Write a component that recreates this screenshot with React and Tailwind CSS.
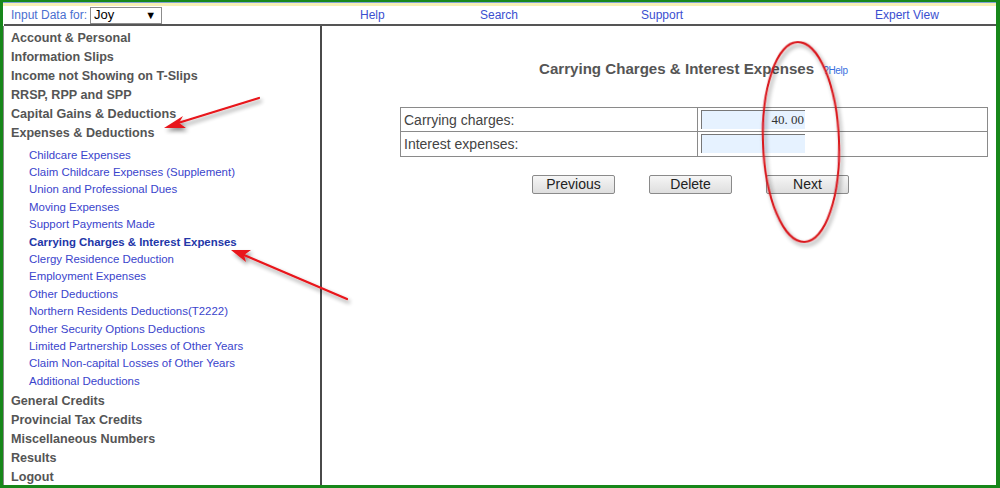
import React from "react";

const mainItems1 = [
  "Account & Personal",
  "Information Slips",
  "Income not Showing on T-Slips",
  "RRSP, RPP and SPP",
  "Capital Gains & Deductions",
  "Expenses & Deductions",
];
const subItems = [
  "Childcare Expenses",
  "Claim Childcare Expenses (Supplement)",
  "Union and Professional Dues",
  "Moving Expenses",
  "Support Payments Made",
  "Carrying Charges & Interest Expenses",
  "Clergy Residence Deduction",
  "Employment Expenses",
  "Other Deductions",
  "Northern Residents Deductions(T2222)",
  "Other Security Options Deductions",
  "Limited Partnership Losses of Other Years",
  "Claim Non-capital Losses of Other Years",
  "Additional Deductions",
];
const mainItems2 = [
  "General Credits",
  "Provincial Tax Credits",
  "Miscellaneous Numbers",
  "Results",
  "Logout",
];

function Btn({ children }) {
  return (
    <button className="w-[83px] h-[19px] border border-[#8a8a8a] rounded-[2px] bg-gradient-to-b from-[#f6f6f6] to-[#dedede] text-[14px] leading-[17px] text-[#222]">
      {children}
    </button>
  );
}

export default function App() {
  return (
    <div
      className="relative w-[1000px] h-[488px] overflow-hidden bg-white border-l-[3px] border-t-[2px] border-r-[4px] border-b-[3px] border-[#17871a] flex flex-col"
      style={{ fontFamily: '"Liberation Sans", Arial, sans-serif' }}
    >
      <div className="h-[1px] bg-[#7fa3d8]" />
      <div className="h-[3px] bg-[#f7f0b4]" />
      {/* header */}
      <div className="h-[18px] flex items-center text-[12px] text-[#3b4fd0] relative">
        <span className="ml-[8px] text-[#4a6fd0]">Input Data for:</span>
        <div className="ml-[3px] w-[72px] h-[17px] border border-[#8c8c8c] flex items-center justify-between px-[3px] text-[13px] text-black">
          <span>Joy</span>
          <span className="text-[11px] mr-[2px]">▼</span>
        </div>
        <span className="absolute left-[357px]">Help</span>
        <span className="absolute left-[477px]">Search</span>
        <span className="absolute left-[638px]">Support</span>
        <span className="absolute left-[872px]">Expert View</span>
      </div>
      <div className="h-[2px] bg-[#555] ml-[1px]" />
      {/* body */}
      <div className="flex flex-1 min-h-0 border-l border-[#8a8a8a]">
        <div className="w-[318px] border-r-[2px] border-[#4a4a4a] pl-[7px] pt-[2.6px]">
          {mainItems1.map((t) => (
            <div key={t} className="h-[19px] leading-[19px] text-[12.6px] font-bold text-[#555]">
              {t}
            </div>
          ))}
          <div className="mt-[4px] mb-[2px] pl-[18px]">
            {subItems.map((t) => (
              <div
                key={t}
                className={
                  "h-[17.4px] leading-[17.4px] " +
                  (t === "Carrying Charges & Interest Expenses"
                    ? "text-[11.4px] font-bold text-[#2236a8]"
                    : "text-[11.45px] text-[#3a44cc]")
                }
              >
                {t}
              </div>
            ))}
          </div>
          {mainItems2.map((t) => (
            <div key={t} className="h-[19px] leading-[19px] text-[12.6px] font-bold text-[#555]">
              {t}
            </div>
          ))}
        </div>
        {/* main */}
        <div className="flex-1 pt-[34px]">
          <div className="flex items-start pl-[217px]">
            <span className="text-[15.1px] leading-[18px] font-bold text-[#555]">
              Carrying Charges &amp; Interest Expenses
            </span>
            <span className="ml-[9px] mt-[3px] text-[10px] tracking-[-0.3px] text-[#3a6fe0]">?Help</span>
          </div>
          <div className="ml-[78px] mt-[29px] w-[588px] border border-[#8a8a8a]">
            <div className="flex h-[24px] border-b border-[#8a8a8a]">
              <div className="w-[297px] border-r border-[#8a8a8a] pl-[3px] text-[14px] leading-[24px] text-[#444]">
                Carrying charges:
              </div>
              <div className="flex-1 pl-[3px] pt-[2px]">
                <div className="w-[104px] h-[19px] bg-[#e6f2ff] border-t border-l border-[#777] text-right pr-[1px] text-[13px] leading-[18px] text-[#333]" style={{ fontFamily: '"Liberation Serif", serif' }}>
                  40. 00
                </div>
              </div>
            </div>
            <div className="flex h-[24px]">
              <div className="w-[297px] border-r border-[#8a8a8a] pl-[3px] text-[14px] leading-[24px] text-[#444]">
                Interest expenses:
              </div>
              <div className="flex-1 pl-[3px] pt-[2px]">
                <div className="w-[104px] h-[19px] bg-[#e6f2ff] border-t border-l border-[#777]" />
              </div>
            </div>
          </div>
          <div className="flex gap-[34px] ml-[210px] mt-[18px]">
            <Btn>Previous</Btn>
            <Btn>Delete</Btn>
            <Btn>Next</Btn>
          </div>
        </div>
      </div>

      {/* annotations */}
      <svg className="absolute left-[-3px] top-[-2px] pointer-events-none" width="1000" height="488" viewBox="0 0 1000 488">
        <defs>
          <filter id="sh" x="-20%" y="-20%" width="140%" height="140%">
            <feGaussianBlur in="SourceAlpha" stdDeviation="2" />
            <feOffset dx="2" dy="3" result="b" />
            <feComponentTransfer>
              <feFuncA type="linear" slope="0.45" />
            </feComponentTransfer>
            <feMerge>
              <feMergeNode />
              <feMergeNode in="SourceGraphic" />
            </feMerge>
          </filter>
        </defs>
        <g filter="url(#sh)">
          <line x1="259" y1="98" x2="178" y2="123" stroke="#e8141a" strokeWidth="2.2" strokeLinecap="round" />
          <polygon points="164,128 183,116 179,123 186,128" fill="#e8141a" />
          <line x1="347" y1="299" x2="244" y2="255" stroke="#e8141a" strokeWidth="2.2" strokeLinecap="round" />
          <polygon points="231,250 251,250 244,255 246,262" fill="#e8141a" />
          <ellipse cx="801" cy="142" rx="38" ry="100" fill="none" stroke="#d9141a" strokeWidth="2" transform="rotate(-2 801 142)" />
        </g>
      </svg>
    </div>
  );
}
